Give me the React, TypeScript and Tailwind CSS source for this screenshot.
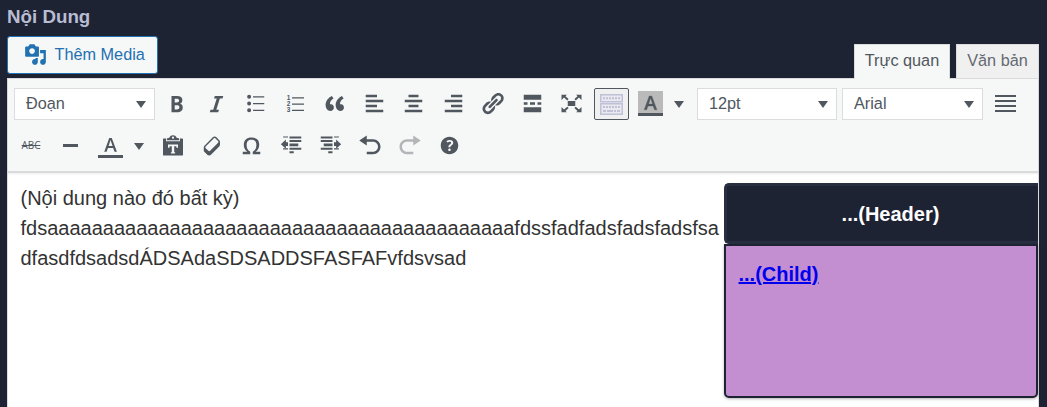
import React from "react";

const Glyph = ({ d, className = "size-[25px]" }: { d: string; className?: string }) => (
  <svg viewBox="0 0 20 20" className={`shrink-0 ${className}`} fill="currentColor">
    <path fillRule="evenodd" d={d} />
  </svg>
);

const Cell = ({ children }: { children: React.ReactNode }) => (
  <div className="flex h-8 w-[39.5px] shrink-0 items-center justify-center pb-px">{children}</div>
);

const Caret = () => (
  <svg viewBox="0 0 10 7" className="h-[7px] w-[10px] shrink-0" fill="#50575e">
    <path d="M0 0h10L5 7z" />
  </svg>
);

const Select = ({ label, className }: { label: string; className: string }) => (
  <div className={`flex h-8 shrink-0 items-center justify-between border border-[#dcdcde] bg-white pr-2 pl-[11px] ${className}`}>
    <span className="pb-px text-[16.25px]">{label}</span>
    <Caret />
  </div>
);

const bold =
  "M6 4v13h4.54c1.37 0 2.46-.33 3.26-1 .8-.66 1.2-1.58 1.2-2.77 0-.84-.17-1.51-.51-2.01s-.9-.85-1.67-1.03v-.09c.57-.1 1.02-.4 1.36-.9s.51-1.13.51-1.91c0-1.14-.39-1.98-1.17-2.5C12.75 4.26 11.5 4 9.78 4H6zm2.57 5.15V6.26h1.36c.73 0 1.27.11 1.61.32.34.22.51.58.51 1.07 0 .54-.16.92-.47 1.15s-.82.35-1.51.35h-1.5zm0 2.19h1.6c1.44 0 2.16.53 2.16 1.61 0 .6-.17 1.05-.51 1.34s-.86.43-1.57.43H8.57v-3.38z";
const italic = "M14.78 6h-2.13l-2.8 9h2.12l-.62 2H4.6l.62-2h2.14l2.8-9H8.03l.62-2h6.75z";
const bullets =
  "M4.9 4.6m-1.6 0a1.6 1.6 0 1 0 3.2 0a1.6 1.6 0 1 0-3.2 0zM4.9 10m-1.6 0a1.6 1.6 0 1 0 3.2 0a1.6 1.6 0 1 0-3.2 0zM4.9 15.4m-1.6 0a1.6 1.6 0 1 0 3.2 0a1.6 1.6 0 1 0-3.2 0zM8 4.1h9v1H8zM8 9.5h9v1H8zM8 14.9h9v1H8z";
const quote =
  "M9.49 13.22c0-.74-.2-1.38-.61-1.9-.62-.78-1.83-.88-2.53-.72-.29-1.65 1.11-3.75 2.92-4.65L7.88 4c-2.73 1.3-5.42 4.28-4.96 8.05C3.21 14.43 4.59 16 6.54 16c.85 0 1.56-.25 2.12-.75s.83-1.18.83-2.03zm8.05 0c0-.74-.2-1.38-.61-1.9-.63-.78-1.83-.88-2.53-.72-.29-1.65 1.11-3.75 2.92-4.65L15.93 4c-2.73 1.3-5.41 4.28-4.95 8.05.29 2.38 1.66 3.95 3.61 3.95.85 0 1.56-.25 2.12-.75s.83-1.18.83-2.03z";
const alignLeft = "M12 5V3H3v2h9zm5 4V7H3v2h14zm-5 4v-2H3v2h9zm5 4v-2H3v2h14z";
const alignCenter = "M14 5V3H6v2h8zm3 4V7H3v2h14zm-3 4v-2H6v2h8zm3 4v-2H3v2h14z";
const alignRight = "M17 5V3H8v2h9zm0 4V7H3v2h14zm0 4v-2H8v2h9zm0 4v-2H3v2h14z";
const link =
  "M17.74 2.76c1.68 1.69 1.68 4.41 0 6.1l-1.53 1.52c-1.12 1.12-2.7 1.47-4.14 1.09l2.62-2.61.76-.77.76-.76c.84-.84.84-2.2 0-3.04-.84-.85-2.2-.85-3.04 0l-.77.76-3.38 3.38c-.37-1.44-.02-3.02 1.1-4.14l1.52-1.53c1.69-1.68 4.42-1.68 6.1 0zM8.59 13.43l5.34-5.34c.42-.42.42-1.1 0-1.52-.44-.43-1.13-.39-1.53 0l-5.33 5.34c-.42.42-.42 1.1 0 1.52.44.43 1.13.39 1.52 0zm-.76 2.29l4.14-4.15c.38 1.44.03 3.02-1.09 4.14l-1.52 1.53c-1.69 1.68-4.41 1.68-6.1 0-1.68-1.68-1.68-4.42 0-6.1l1.53-1.52c1.12-1.12 2.7-1.47 4.14-1.1l-4.14 4.15c-.85.84-.85 2.2 0 3.05.84.84 2.2.84 3.04 0z";
const more = "M17 7V3H3v4h14zM6 11V9H3v2h3zm6 0V9H8v2h4zm5 0V9h-3v2h3zm0 6v-4H3v4h14z";
const fullscreen =
  "M7 8h6v4H7zM2 3h4.300L5.200 4.100l2.500 2.300-1.100 1.100L4 5.200l-2 2zM18 3v4.200l-2-2-2.600 2.300-1.100-1.100 2.500-2.300L13.700 3zM2 17v-4.200l2 2 2.600-2.300 1.100 1.100-2.500 2.300L6.300 17zM18 17h-4.300l1.100-1.100-2.500-2.300 1.100-1.100 2.600 2.300 2-2z";
const textColor = "M13.23 15h1.9L11 4H9L5 15h1.88l1.07-3h4.18zm-1.53-4.54H8.51L10 5.6z";
const eraser =
  "M14.29 4.59l1.1 1.11c.41.4.61.94.61 1.47v2.12c0 .53-.2 1.07-.61 1.47l-6.63 6.63c-.4.41-.94.61-1.47.61s-1.07-.2-1.47-.61l-1.11-1.1-1.1-1.11c-.41-.4-.61-.94-.61-1.47v-2.12c0-.54.2-1.07.61-1.48l6.63-6.62c.4-.41.94-.61 1.47-.61s1.06.2 1.47.61zm-6.21 9.7l6.42-6.42c.39-.39.39-1.03 0-1.43L12.36 4.3c-.19-.19-.45-.29-.72-.29s-.52.1-.71.29l-6.42 6.42c-.39.4-.39 1.04 0 1.43l2.14 2.14c.38.38 1.04.38 1.43 0z";
const omega =
  "M10 5.4c1.27 0 2.24.36 2.91 1.08.66.71 1 1.76 1 3.13 0 1.28-.23 2.37-.69 3.27-.47.89-1.27 1.52-2.22 2.12v2h6v-2h-3.69c.92-.64 1.62-1.34 2.12-2.34.49-1.01.74-2.13.74-3.35 0-1.78-.55-3.19-1.65-4.22S11.92 3.54 10 3.54s-3.43.53-4.52 1.57c-1.1 1.04-1.65 2.44-1.65 4.2 0 1.21.24 2.31.73 3.33.48 1.01 1.19 1.71 2.1 2.36H3v2h6v-2c-.98-.64-1.8-1.28-2.24-2.17-.45-.89-.67-1.96-.67-3.22 0-1.37.33-2.41 1-3.13C7.75 5.76 8.72 5.4 10 5.4z";
const outdent =
  "M3.3 2.7h3.9v.9H3.3zM8.4 2.700h9.400v1.600H8.400zM8.400 5.500h9.400v1.600H8.400zM8.400 8.300h7v2.200h-7zM8.400 11.700h9.400v1.600H8.400zM3.300 12.200h3.900v.9H3.300zM8.400 14.600h3.400v1.600H8.400zM5.500 5.100v2.300h1.700v3H5.500v2.200L1.500 8.900z";
const undo = "M12 5H7V2L1 6l6 4V7h5c2.2 0 4 1.8 4 4s-1.8 4-4 4H7v2h5c3.3 0 6-2.7 6-6s-2.7-6-6-6z";
const help =
  "M17 10c0-3.87-3.14-7-7-7-3.87 0-7 3.13-7 7s3.13 7 7 7c3.86 0 7-3.13 7-7zm-6.3 1.48H9.14v-.43c0-.38.08-.7.24-.98s.46-.57.88-.89c.41-.29.68-.53.81-.71.14-.18.2-.39.2-.62 0-.25-.09-.44-.28-.58-.19-.13-.45-.19-.79-.19-.58 0-1.25.19-2 .57l-.64-1.28c.87-.49 1.8-.74 2.77-.74.81 0 1.45.2 1.92.58.48.39.71.91.71 1.55 0 .43-.09.8-.29 1.11-.19.32-.57.67-1.11 1.06-.38.28-.61.49-.71.63-.1.15-.15.34-.15.57v.35zm-1.47 2.74c-.18-.17-.27-.42-.27-.73 0-.33.08-.58.26-.75s.43-.25.77-.25c.32 0 .57.09.75.26s.27.42.27.74c0 .3-.09.55-.27.72-.18.18-.43.27-.75.27-.33 0-.58-.09-.76-.26z";
const media =
  "M13 11V4c0-.55-.45-1-1-1h-1.67L9 1H5L3.67 3H2c-.55 0-1 .45-1 1v7c0 .55.45 1 1 1h10c.55 0 1-.45 1-1zM7 4.5c1.38 0 2.5 1.12 2.5 2.5S8.38 9.5 7 9.5 4.5 8.38 4.5 7 5.62 4.5 7 4.5zM14 6h5v10.5c0 1.38-1.12 2.5-2.5 2.5S14 17.88 14 16.5s1.12-2.5 2.5-2.5c.17 0 .34.02.5.05V9h-3V6zm-4 8.05V13h2v3.5c0 1.38-1.12 2.5-2.5 2.5S7 17.88 7 16.5 8.12 14 9.5 14c.17 0 .34.02.5.05z";

const PasteText = () => (
  <svg viewBox="0 0 20 21" className="h-[21px] w-5 shrink-0" fill="currentColor">
    <path fillRule="evenodd" d="M.5 3.500H3V6.200h14V3.500h2.500l.5.5V20l-.5.5H.5L0 20V4zM5 9.500v3.200h1.600v-1.400h2.200v6H7.900v1.300h4.200v-1.300h-.9v-6h2.200v1.400H15V9.500z" />
    <path fillRule="evenodd" d="M3.800 5.300V3.500l2.500-.8C7 1 8.300.2 10 .2s3 .8 3.700 2.500l2.500.8v1.800zM10 1.600a1.100 1.100 0 1 0 0 2.200 1.100 1.100 0 0 0 0-2.200z" />
  </svg>
);

const NumberedList = () => (
  <div className="flex h-[18px] items-center gap-[1.5px]">
    <div className="flex flex-col text-[6.5px] leading-[6px] font-bold">
      <span>1</span>
      <span>2</span>
      <span>3</span>
    </div>
    <svg viewBox="0 0 12 18" className="h-[18px] w-3" fill="currentColor">
      <path d="M0 2.2h12v1.2H0zM0 8.5h12v1.2H0zM0 14.8h12v1.2H0z" />
    </svg>
  </div>
);

const Keyboard = () => (
  <svg viewBox="0 0 23 21" className="h-[21px] w-[23px]" fill="none" stroke="#bfc1d8">
    <path fill="#e9e9ef" strokeWidth="1.5" d="M.75.75h21.5v7H.75zM.75 9.75h21.5v10.5H.75z" />
    <path strokeWidth="2" strokeDasharray="2 1" d="M3 4.3h17M3 13h17" />
    <path strokeWidth="2" d="M3 17h3M7 17h6M14 17h2M17 17h3" />
  </svg>
);

export default function App() {
  return (
    <div className="flex h-[407px] w-[1047px] flex-col overflow-hidden bg-[#1e2333] pr-2 pl-[7px] font-['Liberation_Sans',Arial,sans-serif] text-[#50575e]">
      <h2 className="h-9 pt-[5px] text-[18.75px] leading-6 font-bold text-[#b9bdd3]">Nội Dung</h2>
      <div className="flex h-[42px] items-start justify-between">
        <button className="flex h-[38px] w-[151px] items-center rounded-[3px] border border-[#2271b1] bg-[#f6f7f7] pb-0.5 pl-4 text-[16.25px] text-[#2271b1]">
          <Glyph d={media} className="mr-[7.5px] size-[23px]" />
          Thêm Media
        </button>
        <div className="flex gap-[6px] pt-2">
          <div className="relative z-10 flex h-[35px] w-24 justify-center border border-b-0 border-[#dcdcde] bg-[#f6f7f7] pt-[3px] text-[16.25px] leading-6">Trực quan</div>
          <div className="flex h-[34px] w-[83px] justify-center border border-b-0 border-[#dcdcde] bg-[#f0f0f1] pt-[3px] text-[16.25px] leading-6 text-[#646970]">Văn bản</div>
        </div>
      </div>
      <div className="flex flex-1 flex-col border border-b-0 border-[#dcdcde] bg-white">
        <div className="flex h-[94px] shrink-0 flex-col gap-[10px] border-b-2 border-[#d8dadb] bg-[#f6f7f7] pt-[9px] pl-[6px] shadow-[0_1px_2px_rgba(0,0,0,0.08)]">
          <div className="flex h-8 items-center">
            <Select label="Đoạn" className="mr-[2px] w-[141px]" />
            <Cell><Glyph d={bold} /></Cell>
            <Cell><Glyph d={italic} /></Cell>
            <Cell><Glyph d={bullets} /></Cell>
            <Cell><NumberedList /></Cell>
            <Cell><Glyph d={quote} /></Cell>
            <Cell><Glyph d={alignLeft} /></Cell>
            <Cell><Glyph d={alignCenter} /></Cell>
            <Cell><Glyph d={alignRight} /></Cell>
            <Cell><Glyph d={link} /></Cell>
            <Cell><Glyph d={more} /></Cell>
            <Cell><Glyph d={fullscreen} /></Cell>
            <div className="flex h-8 w-[39.5px] shrink-0 justify-center">
              <div className="flex h-8 w-[35px] items-center justify-center rounded-[2px] border border-[#50575e] bg-[#f0f0f1]"><Keyboard /></div>
            </div>
            <div className="mb-px ml-[7px] flex h-[25px] w-[25px] shrink-0 justify-center overflow-hidden border-b-[3px] border-[#50575e] bg-[#bababa]"><Glyph d={textColor} className="size-[25px] stroke-current stroke-[0.3]" /></div>
            <div className="mr-[13px] ml-[11px] flex"><Caret /></div>
            <Select label="12pt" className="mr-[5px] w-[140px]" />
            <Select label="Arial" className="mr-3 w-[141px]" />
            <svg viewBox="0 0 21 18" className="h-[18px] w-[21px]" fill="currentColor"><path d="M0 0h21v2H0zM0 5h21v2H0zM0 10h21v2H0zM0 15h21v2H0z" /></svg>
          </div>
          <div className="flex h-8 items-center">
            <div className="flex w-[34px] justify-center pb-px font-['Open_Sans',sans-serif] text-[10px] tracking-[-0.1px] line-through">ABC</div>
            <div className="mb-px ml-[15px] h-[3px] w-[15px] bg-[#50575e]" />
            <div className="mb-px ml-5 flex h-[25px] w-[25px] justify-center overflow-hidden border-b-[3px] border-[#50575e]"><Glyph d={textColor} /></div>
            <div className="mr-[9px] ml-[11px] flex"><Caret /></div>
            <Cell><PasteText /></Cell>
            <Cell><Glyph d={eraser} /></Cell>
            <Cell><Glyph d={omega} /></Cell>
            <Cell><Glyph d={outdent} /></Cell>
            <Cell><Glyph d={outdent} className="size-[25px] -scale-x-100" /></Cell>
            <Cell><Glyph d={undo} /></Cell>
            <Cell><Glyph d={undo} className="size-[25px] -scale-x-100 opacity-40" /></Cell>
            <Cell><Glyph d={help} /></Cell>
          </div>
        </div>
        <div className="flex flex-1 pt-[10px] pl-[12.5px]">
          <p className="w-[703.5px] shrink-0 text-[20px] leading-[30px] text-[#333]">
            (Nội dung nào đó bất kỳ)<br />
            fdsaaaaaaaaaaaaaaaaaaaaaaaaaaaaaaaaaaaaaaaaaafdssfadfadsfadsfadsfsa<br />
            dfasdfdsadsdÁDSAdaSDSADDSFASFAFvfdsvsad
          </p>
          <div className="flex h-[216px] flex-1 flex-col">
            <div className="flex h-[61px] items-center justify-center rounded-l-[5px] border-[3px] border-r-0 border-[#272e40] bg-[#1e2333] pl-[16px] text-[20px] font-bold text-white">...(Header)</div>
            <div className="h-[154px] rounded-b-[5px] border-2 border-[#1e2333] bg-[#c48fd1] pt-[13px] pl-[12.5px] text-[20px] leading-[30px] font-bold text-[#0000ee] shadow-[0_1px_3px_rgba(0,0,0,0.3)]"><a className="underline">...(Child)</a></div>
          </div>
        </div>
      </div>
    </div>
  );
}
